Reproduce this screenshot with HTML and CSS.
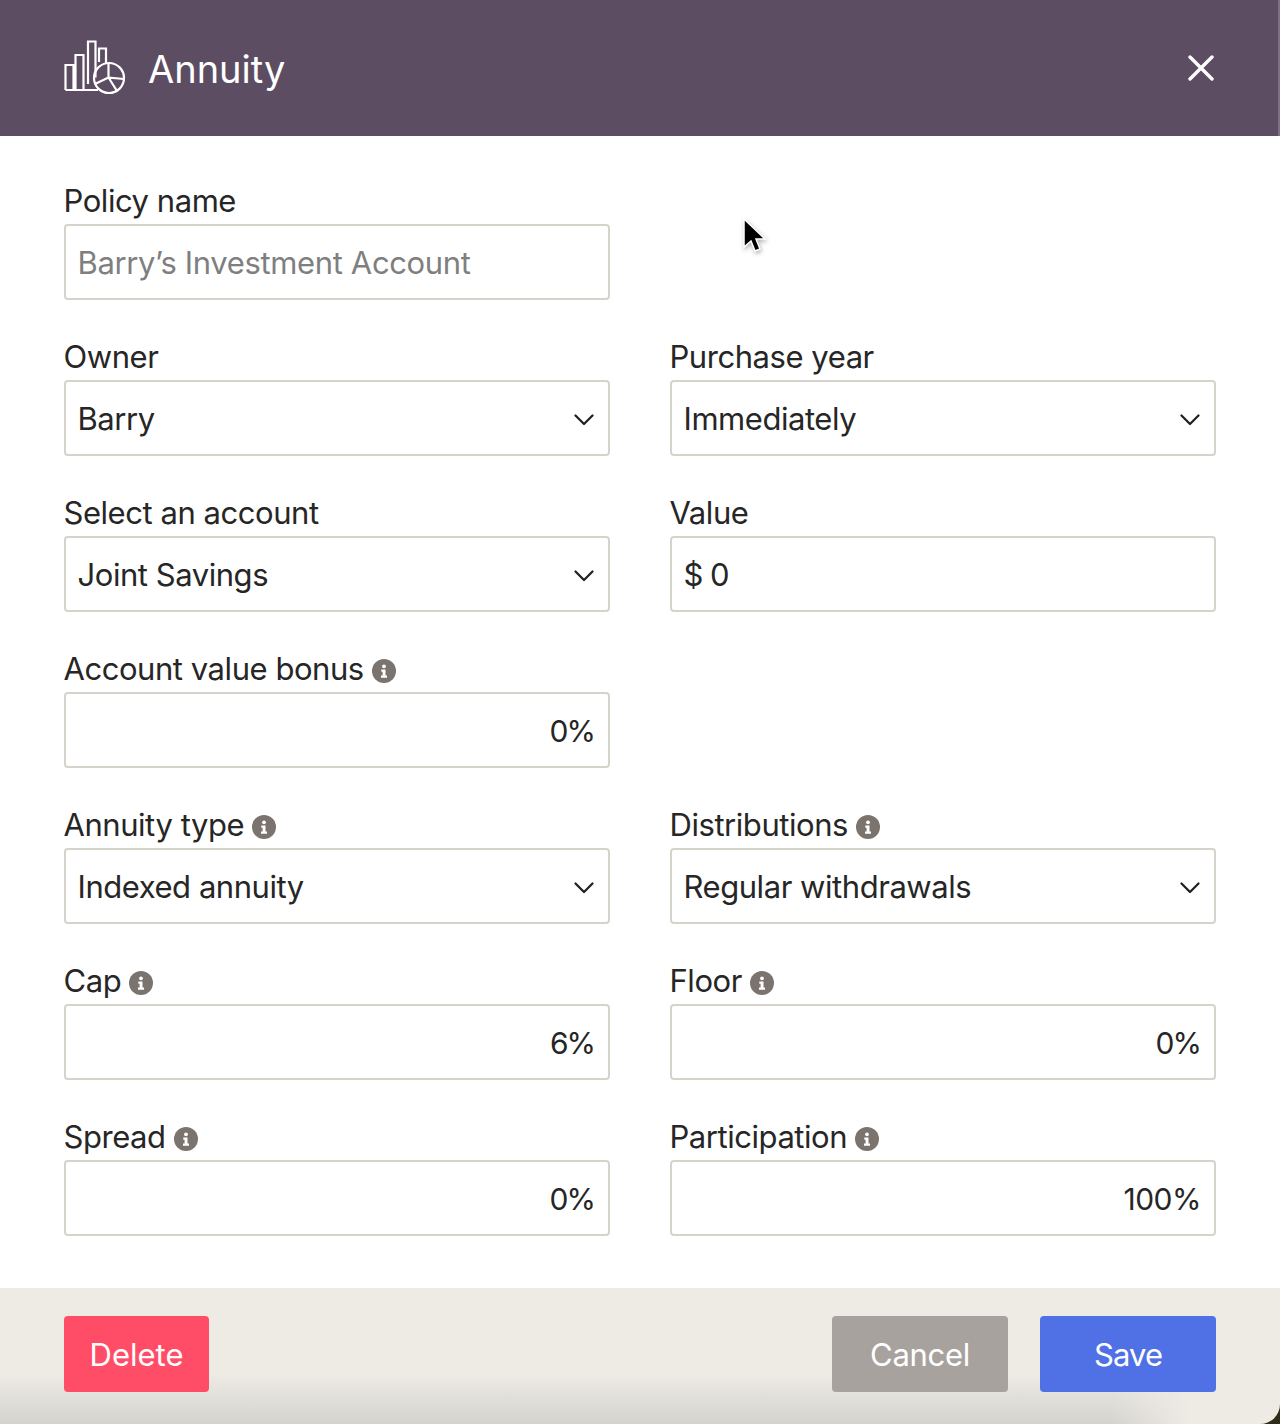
FILE: index.html
```html
<!DOCTYPE html>
<html lang="en">
<head>
<meta charset="utf-8">
<title>Annuity</title>
<link rel="stylesheet" href="styles.css">
</head>
<body>
<svg width="0" height="0" class="defs">
  <symbol id="chev" viewBox="0 0 20 12"><path d="M1.500 1.500 10 10l8.500-8.500" fill="none" stroke="currentColor" stroke-width="2.200" stroke-linecap="round" stroke-linejoin="round"/></symbol>
  <symbol id="info" viewBox="0 0 24 24"><circle cx="12" cy="12" r="12" fill="#7a736e"/><circle cx="12" cy="7.300" r="1.900" fill="#fff"/><path d="M9.300 10.600h4.200v6h1.500v2.200H9v-2.200h1.600v-3.800H9.300z" fill="#fff"/></symbol>
</svg>
<main class="modal">
  <header class="head">
    <div class="title">
      <svg class="logo" width="62" height="58" viewBox="0 0 62 58" fill="none" stroke="#fff" stroke-width="2.200">
        <path d="M1.500 50V25h8v25M11.500 50V15h8v35M24 44V1.500h7.500v36M35 22V8.500h7V23"/>
        <path d="M1.500 50H34"/>
        <circle cx="45" cy="38" r="15"/>
        <path d="M44.500 23.500V37.500L60 39M44.500 37.500 31 44M44.500 37.500 53 51"/>
      </svg>
      <h1>Annuity</h1>
    </div>
    <svg class="close" width="26" height="26" viewBox="0 0 26 26"><path d="M2 2l22 22M24 2 2 24" stroke="#fff" stroke-width="3.400" stroke-linecap="round"/></svg>
  </header>
  <form class="form">
    <div class="field"><label>Policy name</label><div class="box ph">Barry’s Investment Account</div></div>
    <div class="field"></div>
    <div class="field"><label>Owner</label><div class="box sel">Barry<svg class="chev" width="20" height="12"><use href="#chev"/></svg></div></div>
    <div class="field"><label>Purchase year</label><div class="box sel">Immediately<svg class="chev" width="20" height="12"><use href="#chev"/></svg></div></div>
    <div class="field"><label>Select an account</label><div class="box sel">Joint Savings<svg class="chev" width="20" height="12"><use href="#chev"/></svg></div></div>
    <div class="field"><label>Value</label><div class="box tight">$ 0</div></div>
    <div class="field"><label>Account value bonus <svg class="info" width="24" height="24"><use href="#info"/></svg></label><div class="box num">0%</div></div>
    <div class="field"></div>
    <div class="field"><label>Annuity type <svg class="info" width="24" height="24"><use href="#info"/></svg></label><div class="box sel">Indexed annuity<svg class="chev" width="20" height="12"><use href="#chev"/></svg></div></div>
    <div class="field"><label>Distributions <svg class="info" width="24" height="24"><use href="#info"/></svg></label><div class="box sel">Regular withdrawals<svg class="chev" width="20" height="12"><use href="#chev"/></svg></div></div>
    <div class="field"><label>Cap <svg class="info" width="24" height="24"><use href="#info"/></svg></label><div class="box num">6%</div></div>
    <div class="field"><label>Floor <svg class="info" width="24" height="24"><use href="#info"/></svg></label><div class="box num">0%</div></div>
    <div class="field"><label>Spread <svg class="info" width="24" height="24"><use href="#info"/></svg></label><div class="box num">0%</div></div>
    <div class="field"><label>Participation <svg class="info" width="24" height="24"><use href="#info"/></svg></label><div class="box num wide">100%</div></div>
  </form>
  <footer class="foot">
    <button class="btn del" type="button">Delete</button>
    <div class="right">
      <button class="btn cancel" type="button">Cancel</button>
      <button class="btn save" type="button">Save</button>
    </div>
  </footer>
  <svg class="pointer" width="26" height="38" viewBox="0 0 26 38">
    <path d="M3 1v28l7-6 4 10 5-2-4-10h9z" fill="#000" stroke="#fff" stroke-width="1.500"/>
  </svg>
</main>
</body>
</html>
```

FILE: styles.css
```css
* { box-sizing: border-box; }
html, body { margin: 0; padding: 0; }
body {
  width: 1280px;
  height: 1424px;
  background: #2e2c18;
  font-family: Inter, "Liberation Sans", sans-serif;
  color: #262626;
  overflow: hidden;
}
.defs { position: absolute; }
.modal { position: relative; height: 1424px; display: flex; flex-direction: column; }
.head {
  height: 136px;
  background: #5c4d63;
  border-right: 2px solid #7d7183;
  display: flex;
  align-items: center;
  justify-content: space-between;
  padding: 0 64px;
}
.title { display: flex; align-items: center; gap: 22px; }
.logo { width: 62px; height: 58px; margin-top: 2px; }
.head h1 { margin: 2px 0 0; color: #fff; font-size: 38px; font-weight: 400; letter-spacing: 0; line-height: 44px; }
.close { margin-top: -1px; }
.form {
  flex: 1;
  background: #fff;
  display: grid;
  grid-template-columns: 546px 546px;
  grid-auto-rows: 116px;
  column-gap: 60px;
  row-gap: 40px;
  padding: 48px 64px 0;
  align-content: start;
}
.field { display: flex; flex-direction: column; }
label {
  height: 40px;
  padding-bottom: 7px;
  margin-left: -0.5px;
  font-size: 31px;
  line-height: 36px;
  letter-spacing: -0.45px;
  display: flex;
  align-items: center;
  gap: 8px;
}
.info { flex: none; margin-top: 5px; }
.box {
  height: 76px;
  border: 2px solid #d6d3cb;
  border-radius: 4px;
  background: #fff;
  padding: 0 14px 0 11.500px;
  display: flex;
  align-items: center;
  justify-content: space-between;
  font-size: 31px;
  letter-spacing: -0.45px;
}
.ph { color: #7f7f7f; letter-spacing: -0.36px; }
.tight { letter-spacing: -1.1px; }
.num { justify-content: flex-end; font-size: 30px; letter-spacing: -2px; padding: 2px 14px 0 0; }
.num.wide { letter-spacing: -0.5px; padding-right: 13px; }
.chev { color: #1f1f1f; margin-top: 3px; }
.foot {
  height: 136px;
  padding: 28px 64px 0;
  display: flex;
  justify-content: space-between;
  align-items: flex-start;
  background:
    linear-gradient(to right, rgba(238, 235, 229, 0) 1110px, #eeebe5 1190px),
    linear-gradient(180deg, #eeebe5 0, #eeebe5 86px, #e2e0db 108px, #d5d3ce 136px);
  border-bottom-right-radius: 20px;
}
.right { display: flex; gap: 32px; }
.btn {
  height: 76px;
  border: 0;
  border-radius: 4px;
  color: #fff;
  font-family: inherit;
  font-size: 31px;
  letter-spacing: -0.3px;
  padding: 0;
}
.del { width: 145px; background: #ff4d67; letter-spacing: 0; }
.cancel { width: 176px; background: #a8a29e; }
.save { width: 176px; background: #5070e6; letter-spacing: -0.9px; }
.pointer { position: absolute; left: 741px; top: 218px; filter: drop-shadow(1px 2px 2px rgba(0,0,0,.3)); }
```
